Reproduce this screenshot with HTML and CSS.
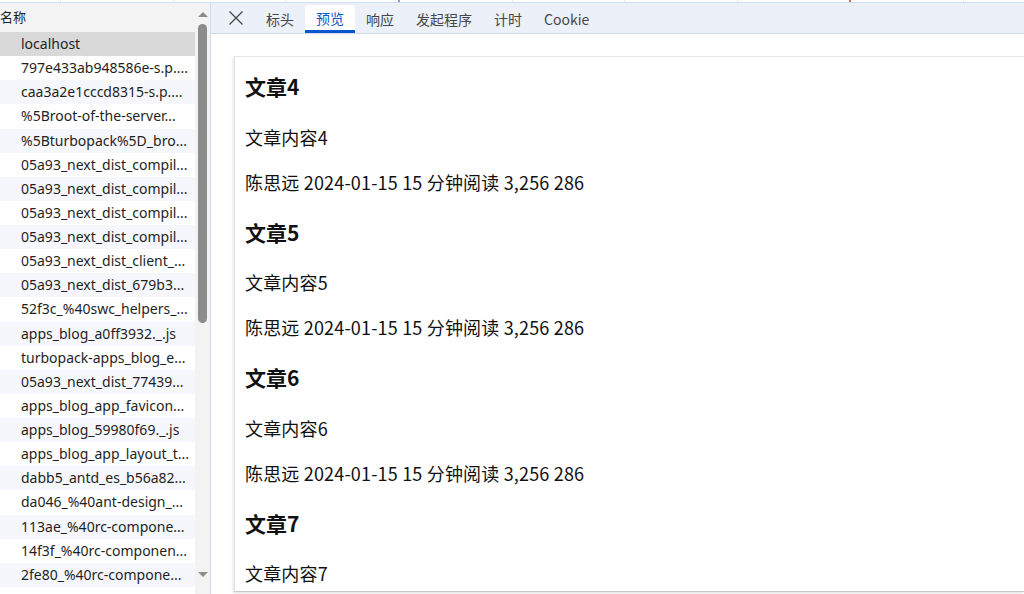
FILE: index.html
```html
<!DOCTYPE html>
<html>
    <head>
        <title>Network</title>
        <link rel="stylesheet" href="styles.css">
    </head>
    <body>
        <div class="timeline">
            <span></span><span></span><span></span><span class="mark"></span><span></span><span></span><span></span><span class="red"></span><span></span>
        </div>
        <div class="panes">
            <div class="list-pane">
                <div class="list">
                    <div class="list-head">名称</div>
                    <div class="rows">
                        <div class="row selected">localhost</div>
                        <div class="row">797e433ab948586e-s.p....</div>
                        <div class="row">caa3a2e1cccd8315-s.p....</div>
                        <div class="row">%5Broot-of-the-server...</div>
                        <div class="row">%5Bturbopack%5D_bro...</div>
                        <div class="row">05a93_next_dist_compil...</div>
                        <div class="row">05a93_next_dist_compil...</div>
                        <div class="row">05a93_next_dist_compil...</div>
                        <div class="row">05a93_next_dist_compil...</div>
                        <div class="row">05a93_next_dist_client_...</div>
                        <div class="row">05a93_next_dist_679b3...</div>
                        <div class="row">52f3c_%40swc_helpers_...</div>
                        <div class="row">apps_blog_a0ff3932._.js</div>
                        <div class="row">turbopack-apps_blog_e...</div>
                        <div class="row">05a93_next_dist_77439...</div>
                        <div class="row">apps_blog_app_favicon...</div>
                        <div class="row">apps_blog_59980f69._.js</div>
                        <div class="row">apps_blog_app_layout_t...</div>
                        <div class="row">dabb5_antd_es_b56a82...</div>
                        <div class="row">da046_%40ant-design_...</div>
                        <div class="row">113ae_%40rc-compone...</div>
                        <div class="row">14f3f_%40rc-componen...</div>
                        <div class="row">2fe80_%40rc-compone...</div>
                    </div>
                </div>
                <div class="scrollbar">
                    <div class="arrow up"></div>
                    <div class="thumb"></div>
                    <div class="arrow down"></div>
                </div>
            </div>

            <div class="detail">
                <div class="tabs">
                    <div class="close">
                        <svg width="16" height="16" viewBox="0 0 16 16"><path d="M1.5 1.5L14.5 14.5M14.5 1.5L1.5 14.5" stroke="#474747" stroke-width="1.3"/></svg>
                    </div>
                    <div class="tab">标头</div>
                    <div class="tab active">预览</div>
                    <div class="tab">响应</div>
                    <div class="tab">发起程序</div>
                    <div class="tab">计时</div>
                    <div class="tab">Cookie</div>
                </div>
                <div class="preview">
                    <div class="frame">
                        <div class="article">
                            <h3>文章4</h3>
                            <p>文章内容4</p>
                            <p>陈思远 2024-01-15 15 分钟阅读 3,256 286</p>
                        </div>
                        <div class="article">
                            <h3>文章5</h3>
                            <p>文章内容5</p>
                            <p>陈思远 2024-01-15 15 分钟阅读 3,256 286</p>
                        </div>
                        <div class="article">
                            <h3>文章6</h3>
                            <p>文章内容6</p>
                            <p>陈思远 2024-01-15 15 分钟阅读 3,256 286</p>
                        </div>
                        <div class="article">
                            <h3>文章7</h3>
                            <p>文章内容7</p>
                        </div>
                    </div>
                </div>
            </div>
        </div>
    </body>
</html>
```

FILE: styles.css
```css
html, body {
    margin: 0;
    height: 100%;
    overflow: hidden;
}

body {
    font-family: "Noto Sans", "Noto Sans CJK SC", sans-serif;
    color: #1f1f1f;
    background: #fff;
    display: flex;
    flex-direction: column;
}

.timeline {
    height: 2px;
    border-bottom: 1px solid #d3dff5;
    display: flex;
    justify-content: space-between;
    padding: 0 60px;
    background: #fff;
}

.timeline span {
    width: 1px;
    height: 2px;
    background: #dde6f5;
}

.timeline .mark {
    width: 2px;
    background: #8a9cc8;
}

.timeline .red {
    width: 2px;
    background: #e06060;
}

.panes {
    flex: 1;
    display: flex;
    min-height: 0;
}

/* request list */
.list-pane {
    width: 210px;
    border-right: 1px solid #cfdbf0;
    display: flex;
    background: #fff;
}

.list {
    flex: 1;
    min-width: 0;
}

.list-head {
    height: 29px;
    line-height: 27px;
    font-size: 13px;
    color: #1f1f1f;
    background: #f3f3f3;
    font-family: "Noto Sans CJK SC", sans-serif;
}

.row {
    height: 24.14px;
    line-height: 24px;
    font-size: 14px;
    padding-left: 21px;
    white-space: nowrap;
    color: #1f1f1f;
}

.row:nth-child(odd) {
    background: #f5f7fc;
}

.row.selected {
    background: #d9d9d9;
}

.scrollbar {
    width: 15px;
    background: #f3f3f3;
    display: flex;
    flex-direction: column;
    align-items: center;
}

.thumb {
    width: 9px;
    height: 299px;
    border-radius: 5px;
    background: #8c8c8c;
    margin-top: 7px;
}

.arrow {
    width: 0;
    height: 0;
    border-left: 5px solid transparent;
    border-right: 5px solid transparent;
}

.arrow.up {
    margin-top: 9px;
    border-bottom: 5px solid #8c8c8c;
}

.arrow.down {
    margin-top: auto;
    margin-bottom: 17px;
    border-top: 5px solid #8c8c8c;
}

/* detail pane */
.detail {
    flex: 1;
    display: flex;
    flex-direction: column;
    min-width: 0;
}

.tabs {
    height: 30px;
    background: #ecf0f9;
    border-bottom: 1px solid #cdd9ef;
    display: flex;
    align-items: stretch;
    font-size: 14px;
    color: #474747;
    font-family: "Noto Sans CJK SC", sans-serif;
}

.close {
    width: 24px;
    margin-left: 13px;
    margin-right: 7px;
    display: flex;
    align-items: center;
    justify-content: center;
}

.tab {
    padding: 2px 11px 0;
    display: flex;
    align-items: center;
    box-sizing: border-box;
}

.tab.active {
    background: #fff;
    color: #0b57d0;
    border-radius: 3px 3px 0 0;
    margin-top: 2px;
    padding-top: 0;
    border-bottom: 3px solid #0b57d0;
}

.preview {
    flex: 1;
    min-height: 0;
    padding: 22px 0 2px 23px;
}

.frame {
    height: 100%;
    box-sizing: border-box;
    border: 1px solid #e4e4e4;
    border-right: none;
    border-bottom: 1px solid #c9c9c9;
    box-shadow: -1px 1px 2px rgba(0, 0, 0, 0.12);
    padding: 14px 10px 0;
    overflow: hidden;
    color: #111;
    font-family: "Noto Sans CJK SC", sans-serif;
}

.frame h3 {
    font-size: 21px;
    line-height: 1.5;
    margin: 21px 0;
    font-weight: bold;
}

.frame .article:first-child h3 {
    margin-top: 0;
}

.frame p {
    font-size: 18px;
    line-height: 1.5;
    margin: 18px 0;
    letter-spacing: 0.18px;
}
```
